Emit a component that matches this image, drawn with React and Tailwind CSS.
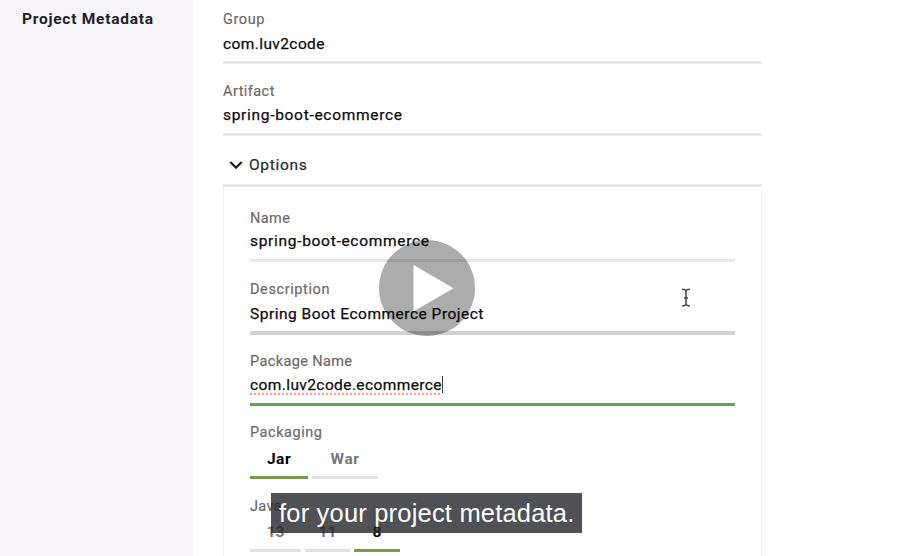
import React from "react";

function Label({ children, className = "" }) {
  return (
    <div className={`h-[18px] whitespace-nowrap text-[14.5px] leading-[18px] text-[#6e6a6b] [-webkit-text-stroke:0.2px_#6e6a6b] ${className}`}>
      {children}
    </div>
  );
}

function Value({ children, className = "" }) {
  return (
    <div className={`whitespace-nowrap text-[15.5px] leading-[20px] text-[#0c0c0e] [-webkit-text-stroke:0.25px_#0c0c0e] ${className}`}>
      {children}
    </div>
  );
}

export default function App() {
  return (
    <div className="relative flex h-[556px] w-[916px] overflow-hidden bg-white font-['Roboto','Liberation_Sans',sans-serif]">
      <aside className="w-[193px] shrink-0 bg-[#f7f5f9] pl-[22px] pt-[9px]">
        <div className="whitespace-nowrap text-[15.5px] font-bold leading-5 tracking-[0.75px] text-[#222125]">Project Metadata</div>
      </aside>

      <main className="ml-[30px] w-[539px] shrink-0">
        <div className="h-[64px] border-b-[3px] border-[#e8e8e8] pt-[11px]">
          <Label className="tracking-[0.6px]">Group</Label>
          <Value className="mt-[5px] tracking-[0.4px]">com.luv2code</Value>
        </div>
        <div className="h-[72px] border-b-[3px] border-[#e8e8e8] pt-[19px]">
          <Label className="tracking-[0.45px]">Artifact</Label>
          <Value className="mt-[4px] tracking-[0.7px]">spring-boot-ecommerce</Value>
        </div>
        <div className="flex h-[51px] items-center gap-[6px] border-b-[3px] border-[#e8e8e8] pl-[6px] pt-[9px]">
          <svg width="14" height="10" viewBox="0 0 14 10" fill="none" stroke="#222125" strokeWidth="2.2">
            <path d="M1.3 2 7 7.6 12.7 2" />
          </svg>
          <span className="text-[15.5px] leading-5 tracking-[0.7px] text-[#29282b] [-webkit-text-stroke:0.2px_#29282b]">Options</span>
        </div>

        <section className="h-[369px] border-x border-[#f1f1f1] px-[26px]">
          <div className="h-[75px] border-b-[3px] border-[#e8e8e8] pt-[23px]">
            <Label className="tracking-[0.4px]">Name</Label>
            <Value className="mt-[3px] tracking-[0.7px]">spring-boot-ecommerce</Value>
          </div>
          <div className="h-[73px] border-b-4 border-[#d0d0d0] pt-[19px]">
            <Label className="tracking-[0.6px]">Description</Label>
            <Value className="mt-[5px] tracking-[0.5px]">Spring Boot Ecommerce Project</Value>
          </div>
          <div className="h-[71px] border-b-[3px] border-[#6fa047] pt-[18px]">
            <Label className="tracking-[0.38px]">Package Name</Label>
            <div className="mt-[4px] flex">
              <Value className="tracking-[0.4px] underline decoration-[#f59a90] decoration-dotted decoration-2 underline-offset-[3px] [text-decoration-skip-ink:none]">
                com.luv2code.ecommerce
              </Value>
              <span className="mt-[1px] h-[17px] w-px bg-[#3c3c40]" />
            </div>
          </div>
          <Label className="mt-[18px] tracking-[0.55px]">Packaging</Label>
          <div className="mt-[7px] flex gap-1 text-[15.5px] font-bold leading-[20px] tracking-[0.5px]">
            <div className="h-[30px] w-[58px] border-b-[3px] border-[#6fa047] text-center text-black">Jar</div>
            <div className="h-[30px] w-[66px] border-b-[3px] border-[#e0e0e0] text-center text-[#77767a]">War</div>
          </div>
          <Label className="mt-[19px] tracking-[0.3px]">Java</Label>
          <div className="mt-[6px] flex gap-1 text-[15.5px] font-bold leading-[20px]">
            <div className="h-[30px] w-[51px] border-b-[3px] border-[#e0e0e0] text-center text-[#77767a]">13</div>
            <div className="h-[30px] w-[45px] border-b-[3px] border-[#e0e0e0] text-center text-[#77767a]">11</div>
            <div className="h-[30px] w-[46px] border-b-[3px] border-[#6fa047] text-center text-black">8</div>
          </div>
        </section>
      </main>

      {/* Play button */}
      <svg className="absolute left-[379px] top-[240px]" width="96" height="96" viewBox="0 0 96 96">
        <path
          fill="#000"
          fillOpacity="0.325"
          fillRule="evenodd"
          d="M48 0a48 48 0 1 1 0 96a48 48 0 1 1 0-96ZM34.500 25v46.500L74.500 48.200Z"
        />
      </svg>

      {/* Text cursor */}
      <svg className="absolute left-[681px] top-[288px]" width="10" height="19" viewBox="0 0 10 19" fill="none" stroke="#4c4c4f" strokeWidth="1.6">
        <path d="M1 1.200c2.200 0 4 .4 4 2v12.600c0 1.600-1.800 2-4 2M9 1.200c-2.200 0-4 .4-4 2M5 15.800c0 1.600 1.800 2 4 2M3 10h4" />
      </svg>

      <div className="absolute left-[271px] top-[493px] h-[40px] w-[311px] whitespace-nowrap bg-[#23252a]/80 pl-[8px] font-['Liberation_Sans',Arial,sans-serif] text-[25.5px] leading-[40px] tracking-[0.19px] text-white">
        for your project metadata.
      </div>
    </div>
  );
}
